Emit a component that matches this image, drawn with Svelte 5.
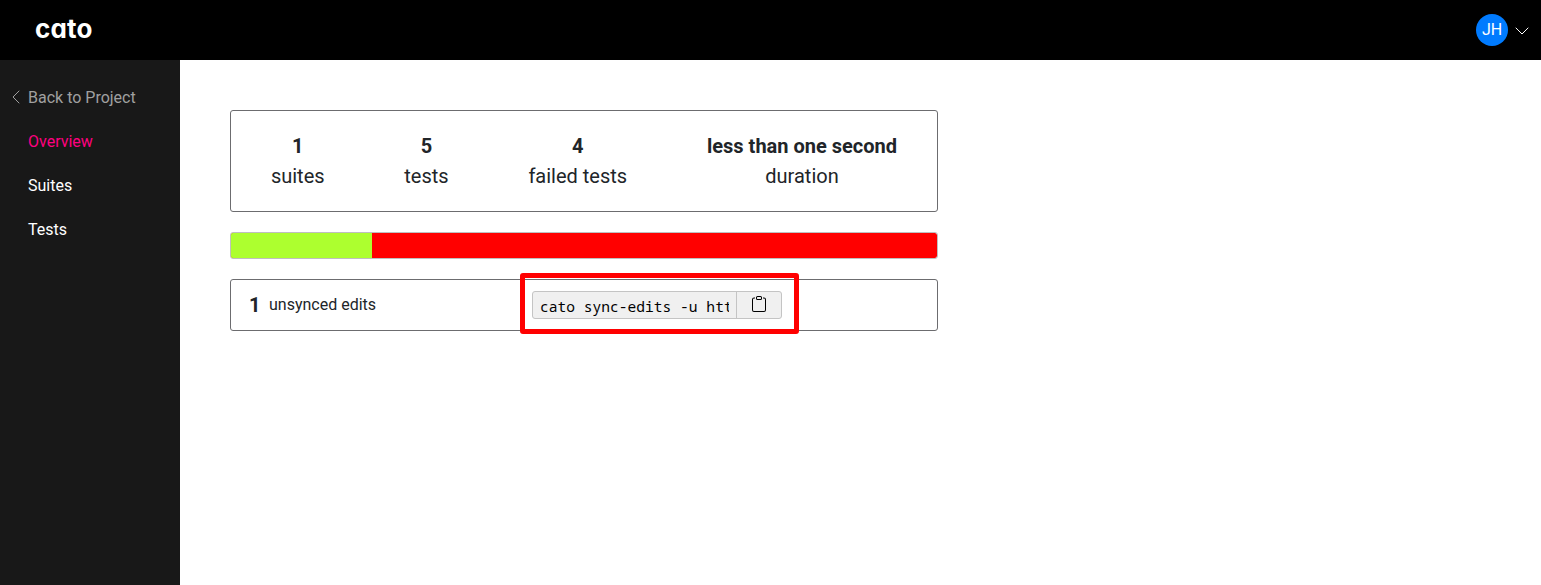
<script>
  const links = [
    { label: 'Overview', active: true },
    { label: 'Suites', active: false },
    { label: 'Tests', active: false }
  ];
  const stats = [
    { value: '1', label: 'suites' },
    { value: '5', label: 'tests' },
    { value: '4', label: 'failed tests' },
    { value: 'less than one second', label: 'duration' }
  ];
  const passed = 1;
  const total = 5;
</script>

<div class="app">
  <header>
    <span class="logo">cato</span>
    <div class="user">
      <span class="avatar">JH</span>
      <svg class="chevron" width="16" height="16" viewBox="0 0 16 16" fill="none" stroke="#fff" stroke-linecap="round" stroke-linejoin="round"><path d="M2 5l6 6 6-6" /></svg>
    </div>
  </header>
  <div class="body">
    <nav>
      <span class="item back">
        <svg width="16" height="16" viewBox="0 0 16 16" fill="none" stroke="currentColor" stroke-linecap="round" stroke-linejoin="round"><path d="M11 2L5 8l6 6" /></svg>
        Back to Project
      </span>
      {#each links as link}
        <span class="item" class:active={link.active}>{link.label}</span>
      {/each}
    </nav>
    <main>
      <section class="card stats">
        {#each stats as stat}
          <div class="stat">
            <strong>{stat.value}</strong>
            <span>{stat.label}</span>
          </div>
        {/each}
      </section>
      <div class="progress">
        <div class="passed" style:width="{(passed / total) * 100}%"></div>
      </div>
      <section class="card edits">
        <strong>1</strong>
        <span class="caption">unsynced edits</span>
        <div class="highlight">
          <div class="command">
            <div class="code"><span>cato sync-edits -u http</span></div>
            <button aria-label="Copy">
              <svg width="16" height="16" viewBox="0 0 16 16" fill="#000"><path d="M4 1.5H3a2 2 0 0 0-2 2V14a2 2 0 0 0 2 2h10a2 2 0 0 0 2-2V3.500a2 2 0 0 0-2-2h-1v1h1a1 1 0 0 1 1 1V14a1 1 0 0 1-1 1H3a1 1 0 0 1-1-1V3.500a1 1 0 0 1 1-1h1v-1z" /><path d="M9.500 1a.5.5 0 0 1 .5.500v1a.5.5 0 0 1-.5.500h-3a.5.5 0 0 1-.5-.500v-1a.5.5 0 0 1 .5-.500h3zm-3-1A1.500 1.500 0 0 0 5 1.500v1A1.500 1.500 0 0 0 6.500 4h3A1.500 1.500 0 0 0 11 2.500v-1A1.500 1.500 0 0 0 9.500 0h-3z" /></svg>
            </button>
          </div>
        </div>
      </section>
    </main>
  </div>
</div>

<style>
  :global(*) { box-sizing: border-box; }
  .app {
    min-height: 100vh;
    display: flex;
    flex-direction: column;
    font: 16px/24px Roboto, sans-serif;
    color: #212529;
    background: #fff;
  }
  header {
    height: 60px;
    background: #000;
    color: #fff;
    display: flex;
    align-items: center;
    justify-content: space-between;
    padding: 0 11px 0 35px;
  }
  .logo {
    padding-bottom: 2px;
    font: 700 26px/30px Inter, sans-serif;
    font-feature-settings: "cv11";
    letter-spacing: 0.2px;
  }
  .user { display: flex; align-items: center; gap: 6px; }
  .avatar {
    width: 32px;
    height: 32px;
    border-radius: 50%;
    background: #007bff;
    line-height: 32px;
    text-align: center;
  }
  .chevron { margin-top: 1px; }
  .body { flex: 1; display: flex; }
  nav {
    width: 180px;
    background: #181818;
    padding-top: 16px;
    display: flex;
    flex-direction: column;
  }
  .item {
    height: 44px;
    padding-left: 28px;
    line-height: 44px;
    color: #fff;
  }
  .item.active { color: #ff0080; }
  .item.back {
    display: flex;
    align-items: center;
    gap: 4px;
    padding-left: 8px;
    color: #a0a0a0;
  }
  .back svg { margin-top: -2px; }
  main {
    padding: 50px;
    display: flex;
    flex-direction: column;
    gap: 20px;
  }
  .card {
    width: 708px;
    border: 1px solid #6c6c6f;
    border-radius: 3px;
  }
  .stats {
    height: 102px;
    padding-top: 20px;
    display: grid;
    grid-template-columns: 133.5fr 124fr 178.500fr 270fr;
    font-size: 20px;
    line-height: 30px;
  }
  .stat { display: flex; flex-direction: column; align-items: center; white-space: nowrap; }
  .progress {
    width: 708px;
    height: 27px;
    border: 1px solid #bfbfbf;
    border-radius: 3px;
    background: #f00;
    background-clip: padding-box;
    overflow: hidden;
  }
  .passed { height: 100%; background: #adff2f; }
  .edits {
    height: 52px;
    display: flex;
    align-items: center;
    padding-left: 18px;
  }
  .edits strong { width: 20px; font-size: 20px; }
  .caption { width: 251px; }
  .highlight {
    flex: none;
    width: 279px;
    height: 61px;
    border: 5px solid #f00;
    border-radius: 3px;
    margin: -7px 0 -4px;
    padding: 13px 0 0 7px;
  }
  .command {
    width: 250px;
    height: 28px;
    display: flex;
    border: 1px solid #c4c4c4;
    border-radius: 3px;
    background: #f0f0f0;
    overflow: hidden;
  }
  .code {
    width: 204px;
    padding: 0 7px;
    border-right: 1px solid #c4c4c4;
    font: 14.6px/29px "Noto Sans Mono", "DejaVu Sans Mono", monospace;
    color: #000;
  }
  .code span { display: block; overflow: hidden; white-space: nowrap; }
  button {
    flex: 1;
    border: 0;
    padding: 0 0 2px;
    background: none;
    display: flex;
    align-items: center;
    justify-content: center;
  }
</style>
